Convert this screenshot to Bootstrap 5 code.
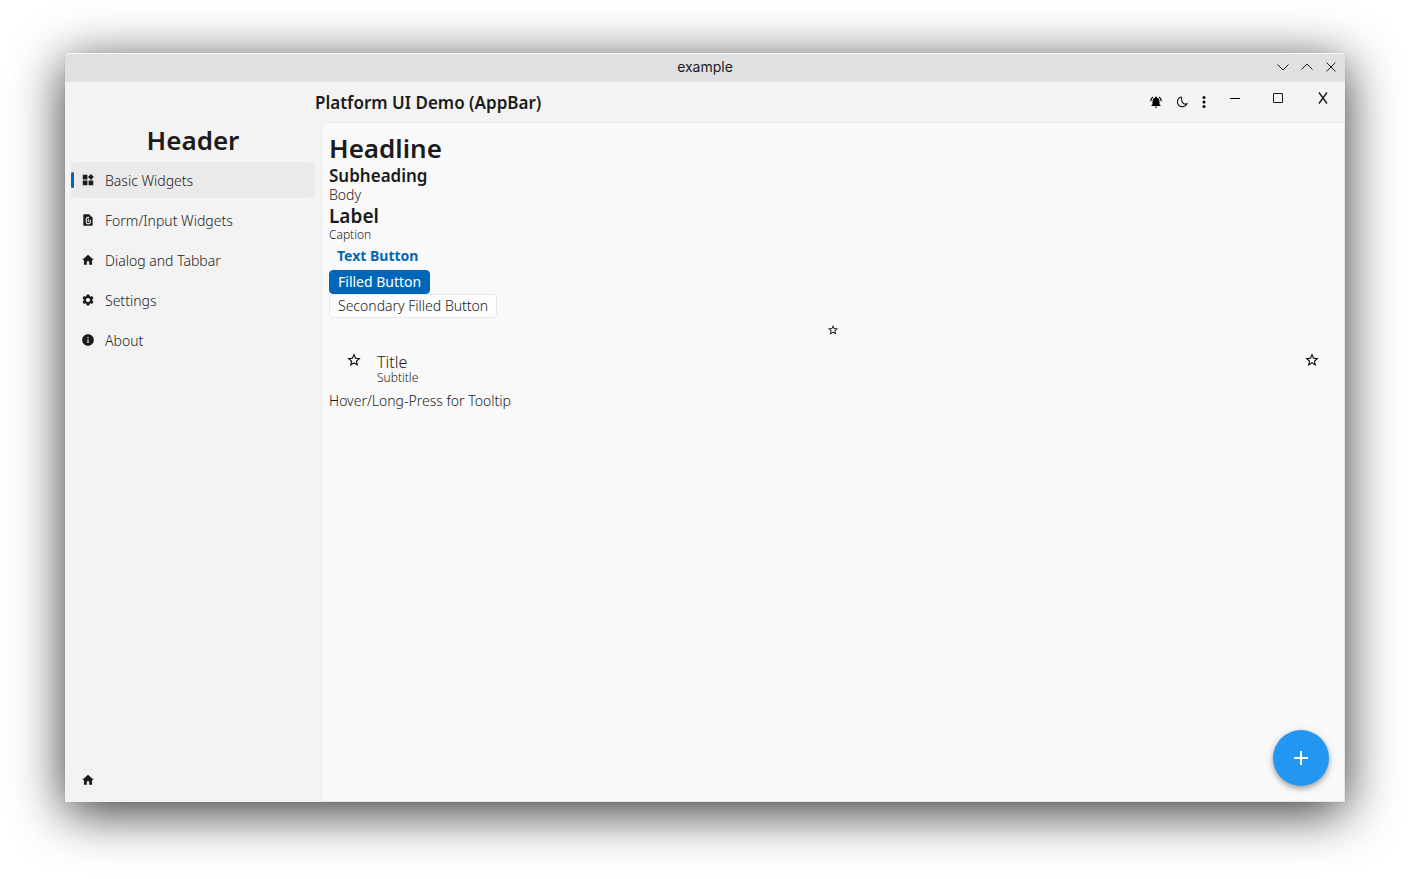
<!DOCTYPE html>
<html lang="en">
<head>
<meta charset="utf-8">
<meta name="viewport" content="width=device-width, initial-scale=1">
<title>example</title>
<link href="https://cdn.jsdelivr.net/npm/bootstrap@5.3.0/dist/css/bootstrap.min.css" rel="stylesheet">
<style>
  body { font-family: "Noto Sans", sans-serif; font-weight: 300; font-size: 14px; line-height: 18px; color: #1b1b1b; background: #fff; }
  .desktop { padding: 53px 65px 77px; }
  .app-window { background: #f3f3f3; border-radius: 4px 4px 0 0; box-shadow: 0 10px 52px rgba(0,0,0,.8), 0 0 1px rgba(0,0,0,.3); }
  .title-bar { height: 29px; background: #dee0e2; border-top: 1px solid #fcfcfc; border-radius: 4px 4px 0 0; }
  .title-text { font: 400 14px/26px Inter, sans-serif; }
  .title-controls { right: 2px; }
  .icon-btn { display: inline-flex; align-items: center; justify-content: center; padding: 0; border: 0; background: none; color: inherit; }
  .icon-btn svg, .side-link svg { display: block; flex: none; }
  .title-controls .icon-btn { width: 24px; height: 26px; }
  .app-bar { height: 40px; padding-left: 250px; }
  .app-bar-title { padding-top: 2px; }
  .action-btn { width: 26px; color: #000; }
  .more-btn { width: 18px; color: #000; }
  .caption-btn { width: 44px; height: 32px; }
  .text-headline { font-size: 26px; line-height: 36px; font-weight: 600; }
  .text-subheading { font-size: 17px; line-height: 20px; font-weight: 600; }
  .text-label { font-size: 19px; line-height: 24px; font-weight: 600; }
  .text-caption { font-size: 12px; line-height: 14px; }
  .side-pane { width: 256px; padding: 0 6px 4px; }
  .side-link { height: 36px; padding: 0 10px; gap: 10px; border-radius: 4px; color: inherit; text-decoration: none; position: relative; }
  .side-link.active { background: #eaeaea; }
  .side-link.active::before { content: ""; position: absolute; left: 0; top: 10px; width: 3px; height: 16px; border-radius: 2px; background: #0067b8; }
  .side-link span { padding-top: 2px; }
  .page-pane { background: #f9f9f9; border: 1px solid #e8e8e8; border-radius: 8px 0 0 0; padding: 7px; }
  .btn { --bs-btn-font-size: 14px; --bs-btn-line-height: 20px; --bs-btn-border-radius: 4px; }
  .btn-plain { --bs-btn-padding-x: 7px; --bs-btn-padding-y: 3px; color: #0067b8; font-weight: 700; }
  .btn-accent { --bs-btn-padding-x: 8px; --bs-btn-padding-y: 1px; --bs-btn-bg: #0067b8; --bs-btn-border-color: #0067b8; --bs-btn-color: #fff; font-weight: 400; }
  .btn-soft { --bs-btn-padding-x: 8px; --bs-btn-padding-y: 1px; --bs-btn-bg: #fdfdfd; --bs-btn-border-color: #e8e8e8; font-weight: 300; color: #1b1b1b; }
  .star-row { height: 24px; }
  .tile { height: 50px; padding: 0 17px; }
  .tile > svg { margin-bottom: 14px; }
  .tile-title { font-size: 16px; line-height: 18px; }
  .tile-text { padding: 4px 0 0 15px; }
  .fab { right: 15px; bottom: 15px; width: 56px; height: 56px; border-radius: 50%; background: #2196f3; color: #fff; box-shadow: 0 3px 5px rgba(0,0,0,.25), 0 2px 10px rgba(0,0,0,.14); }
</style>
</head>
<body>
<svg class="d-none" aria-hidden="true">
  <symbol id="home" viewBox="0 0 24 24"><path d="M10 20v-6h4v6h5v-8h3L12 3 2 12h3v8z"/></symbol>
  <symbol id="star" viewBox="0 0 24 24"><path d="M22 9.24l-7.190-.62L12 2 9.190 8.630 2 9.240l5.460 4.730L5.820 21 12 17.270 18.180 21l-1.630-7.030L22 9.240zM12 15.400l-3.760 2.270 1-4.280-3.320-2.880 4.380-.38L12 6.100l1.710 4.040 4.380.38-3.320 2.880 1 4.280L12 15.400z"/></symbol>
</svg>
<div class="desktop min-vh-100 d-flex">
  <div class="app-window flex-grow-1 d-flex flex-column">
    <header class="title-bar position-relative text-center">
      <div class="title-text">example</div>
      <div class="title-controls position-absolute top-0 d-flex">
        <button class="icon-btn" type="button" aria-label="Minimize window"><svg width="12" height="12" fill="none" stroke="currentColor"><path d="M.5 3.500 6 9l5.500-5.500"/></svg></button>
        <button class="icon-btn" type="button" aria-label="Maximize window"><svg width="12" height="12" fill="none" stroke="currentColor"><path d="M.5 8.500 6 3l5.500 5.500"/></svg></button>
        <button class="icon-btn" type="button" aria-label="Close window"><svg width="12" height="12" fill="none" stroke="currentColor"><path d="m1.500 1.500 9 9m0-9-9 9"/></svg></button>
      </div>
    </header>
    <div class="app-bar d-flex">
      <h1 class="text-subheading app-bar-title m-0 me-auto align-self-center">Platform UI Demo (AppBar)</h1>
      <button class="icon-btn action-btn" type="button" aria-label="Notifications"><svg width="14" height="14" viewBox="0 0 24 24" fill="currentColor"><path d="M7.580 4.080 6.150 2.650C3.750 4.480 2.170 7.300 2.030 10.500h2c.15-2.650 1.510-4.970 3.550-6.420zm12.390 6.420h2c-.15-3.200-1.730-6.020-4.120-7.850l-1.420 1.430c2.020 1.450 3.390 3.770 3.540 6.420zM18 11c0-3.070-1.640-5.640-4.500-6.320V4c0-.83-.67-1.500-1.500-1.500s-1.500.67-1.500 1.500v.68C7.630 5.360 6 7.920 6 11v5l-2 2v1h16v-1l-2-2v-5zm-6 11c1.100 0 2-.9 2-2h-4c0 1.100.9 2 2 2z"/></svg></button>
      <button class="icon-btn action-btn" type="button" aria-label="Dark mode"><svg width="14" height="14" viewBox="0 0 24 24" fill="none" stroke="currentColor" stroke-width="1.800"><path d="M10.500 3.500a8.500 8.500 0 1 0 10 11.500c-2 .8-5 .3-6.500-1.200-2-1.800-2.500-3-2.500-5 0-2 0-3.300-1-5.300z"/></svg></button>
      <button class="icon-btn more-btn" type="button" aria-label="More"><svg width="4" height="14" fill="currentColor"><circle cx="2" cy="2.500" r="1.500"/><circle cx="2" cy="7" r="1.500"/><circle cx="2" cy="11.500" r="1.500"/></svg></button>
      <button class="icon-btn caption-btn" type="button" aria-label="Minimize"><svg width="10" height="10"><path d="M0 5h10v1H0z"/></svg></button>
      <button class="icon-btn caption-btn" type="button" aria-label="Maximize"><svg width="12" height="10" fill="none" stroke="currentColor"><path d="M.5.5h9v9h-9z"/></svg></button>
      <button class="icon-btn caption-btn" type="button" aria-label="Close"><svg width="10" height="12" fill="none" stroke="currentColor" stroke-width="1.400"><path d="m1 .5 8 11m0-11-8 11"/></svg></button>
    </div>
    <div class="d-flex flex-grow-1">
      <nav class="side-pane d-flex flex-column gap-1 flex-shrink-0" aria-label="Pages">
        <h2 class="text-headline text-center m-0">Header</h2>
        <a class="side-link d-flex align-items-center active" href="#" aria-current="page"><svg width="14" height="14" viewBox="0 0 24 24" fill="currentColor"><path d="M13 13v8h8v-8zM3 21h8v-8H3zM3 3v8h8V3zm14-1.300L12 6.800l5 5 5-5z"/></svg><span>Basic Widgets</span></a>
        <a class="side-link d-flex align-items-center" href="#"><svg width="14" height="14" viewBox="0 0 24 24" fill="currentColor"><path d="M14 2H6a2 2 0 0 0-2 2v16a2 2 0 0 0 2 2h12a2 2 0 0 0 2-2V8z"/><path d="M14 7.500h-2a3 3 0 0 0-3 3V15a3.500 3.500 0 0 0 7 0v-3.500M12.500 10v5.500" fill="none" stroke="#f3f3f3" stroke-width="1.800"/></svg><span>Form/Input Widgets</span></a>
        <a class="side-link d-flex align-items-center" href="#"><svg width="14" height="14" fill="currentColor"><use href="#home"/></svg><span>Dialog and Tabbar</span></a>
        <a class="side-link d-flex align-items-center" href="#"><svg width="14" height="14" viewBox="0 0 24 24" fill="currentColor"><path d="M19.140 12.940c.04-.3.06-.61.06-.94 0-.32-.02-.64-.07-.94l2.030-1.580c.18-.14.23-.41.12-.61l-1.920-3.320c-.12-.22-.37-.29-.59-.22l-2.390.96c-.5-.38-1.030-.7-1.620-.94l-.36-2.540c-.04-.24-.24-.41-.48-.41h-3.840c-.24 0-.43.17-.47.41l-.36 2.540c-.59.24-1.130.57-1.620.94l-2.390-.96c-.22-.08-.47 0-.59.22L2.740 8.870c-.12.210-.08.470.12.610l2.030 1.580c-.05.3-.09.630-.09.940s.02.640.07.940l-2.030 1.580c-.18.140-.23.410-.12.610l1.920 3.320c.12.220.37.290.59.220l2.390-.96c.5.380 1.030.7 1.620.94l.36 2.540c.05.240.24.410.48.410h3.840c.24 0 .44-.17.47-.41l.36-2.540c.59-.24 1.130-.56 1.620-.94l2.390.96c.22.080.47 0 .59-.22l1.920-3.320c.12-.22.07-.47-.12-.61l-2.010-1.580zM12 15.600c-1.980 0-3.600-1.620-3.600-3.600s1.620-3.600 3.600-3.600 3.600 1.620 3.600 3.600-1.620 3.600-3.600 3.600z"/></svg><span>Settings</span></a>
        <a class="side-link d-flex align-items-center" href="#"><svg width="14" height="14" viewBox="0 0 24 24" fill="currentColor"><path d="M12 2C6.480 2 2 6.480 2 12s4.480 10 10 10 10-4.480 10-10S17.520 2 12 2zm1 15h-2v-6h2v6zm0-8h-2V7h2v2z"/></svg><span>About</span></a>
        <a class="side-link d-flex align-items-center mt-auto" href="#" aria-label="Home"><svg width="14" height="14" fill="currentColor"><use href="#home"/></svg></a>
      </nav>
      <main class="page-pane flex-grow-1 position-relative d-flex flex-column">
        <h2 class="text-headline m-0">Headline</h2>
        <h3 class="text-subheading m-0">Subheading</h3>
        <p class="m-0">Body</p>
        <h4 class="text-label m-0">Label</h4>
        <p class="text-caption m-0">Caption</p>
        <button type="button" class="btn btn-plain align-self-start">Text Button</button>
        <button type="button" class="btn btn-accent align-self-start">Filled Button</button>
        <button type="button" class="btn btn-soft align-self-start">Secondary Filled Button</button>
        <button type="button" class="icon-btn star-row" aria-label="Favorite"><svg width="12" height="12"><use href="#star"/></svg></button>
        <div class="tile d-flex align-items-center">
          <svg width="16" height="16"><use href="#star"/></svg>
          <div class="tile-text me-auto">
            <div class="tile-title">Title</div>
            <div class="text-caption">Subtitle</div>
          </div>
          <svg width="16" height="16"><use href="#star"/></svg>
        </div>
        <p class="m-0" title="Tooltip">Hover/Long-Press for Tooltip</p>
        <button type="button" class="icon-btn fab position-absolute" aria-label="Add"><svg width="14" height="14" fill="currentColor"><path d="M6 0h2v6h6v2H8v6H6V8H0V6h6z"/></svg></button>
      </main>
    </div>
  </div>
</div>
<script src="https://cdn.jsdelivr.net/npm/bootstrap@5.3.0/dist/js/bootstrap.bundle.min.js"></script>
</body>
</html>
